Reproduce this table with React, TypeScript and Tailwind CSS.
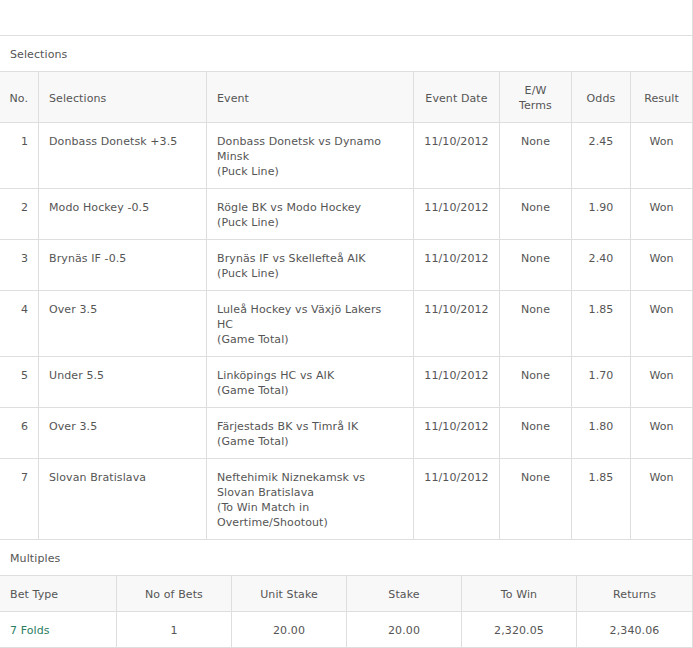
import React from 'react';

type Row = {
    no: number;
    selection: string;
    event: string[];
    odds: string;
};

const rows: Row[] = [
    { no: 1, selection: 'Donbass Donetsk +3.5', event: ['Donbass Donetsk vs Dynamo', 'Minsk', '(Puck Line)'], odds: '2.45' },
    { no: 2, selection: 'Modo Hockey -0.5', event: ['Rögle BK vs Modo Hockey', '(Puck Line)'], odds: '1.90' },
    { no: 3, selection: 'Brynäs IF -0.5', event: ['Brynäs IF vs Skellefteå AIK', '(Puck Line)'], odds: '2.40' },
    { no: 4, selection: 'Over 3.5', event: ['Luleå Hockey vs Växjö Lakers', 'HC', '(Game Total)'], odds: '1.85' },
    { no: 5, selection: 'Under 5.5', event: ['Linköpings HC vs AIK', '(Game Total)'], odds: '1.70' },
    { no: 6, selection: 'Over 3.5', event: ['Färjestads BK vs Timrå IK', '(Game Total)'], odds: '1.80' },
    {
        no: 7,
        selection: 'Slovan Bratislava',
        event: ['Neftehimik Niznekamsk vs', 'Slovan Bratislava', '(To Win Match in', 'Overtime/Shootout)'],
        odds: '1.85',
    },
];

const cell = 'px-[10px] pt-[11px] pb-[9px] border-r border-b border-[#dedede] leading-[15px] whitespace-nowrap';
const head = `${cell} bg-[#f8f8f8]`;

export default function App() {
    return (
        <div
            className="w-[693px] bg-white text-[11px] text-[#555] tracking-[0.1px]"
            style={{ fontFamily: '"DejaVu Sans", Verdana, sans-serif' }}
        >
            {/* empty top row */}
            <div className={`${cell} h-[36px]`} />
            <div className={cell}>Selections</div>

            {/* Selections table */}
            <div className="grid grid-cols-[39px_168px_207px_86px_72px_59px_62px]">
                <div className={`${head} flex items-center justify-end`}>No.</div>
                <div className={`${head} flex items-center`}>Selections</div>
                <div className={`${head} flex items-center`}>Event</div>
                <div className={`${head} flex items-center justify-center`}>Event Date</div>
                <div className={`${head} text-center`}>
                    E/W
                    <br />
                    Terms
                </div>
                <div className={`${head} flex items-center justify-center`}>Odds</div>
                <div className={`${head} flex items-center justify-center`}>Result</div>

                {rows.map((r) => (
                    <React.Fragment key={r.no}>
                        <div className={`${cell} text-right`}>{r.no}</div>
                        <div className={cell}>{r.selection}</div>
                        <div className={cell}>
                            {r.event.map((line, i) => (
                                <div key={i}>{line}</div>
                            ))}
                        </div>
                        <div className={`${cell} text-center`}>11/10/2012</div>
                        <div className={`${cell} text-center`}>None</div>
                        <div className={`${cell} text-center`}>{r.odds}</div>
                        <div className={`${cell} text-center`}>Won</div>
                    </React.Fragment>
                ))}
            </div>

            {/* Multiples */}
            <div className={cell}>Multiples</div>
            <div className="grid grid-cols-[117px_115px_115px_115px_115px_116px]">
                <div className={head}>Bet Type</div>
                <div className={`${head} text-center`}>No of Bets</div>
                <div className={`${head} text-center`}>Unit Stake</div>
                <div className={`${head} text-center`}>Stake</div>
                <div className={`${head} text-center`}>To Win</div>
                <div className={`${head} text-center`}>Returns</div>

                <div className={`${cell} text-[#2b7d60]`}>7 Folds</div>
                <div className={`${cell} text-center`}>1</div>
                <div className={`${cell} text-center`}>20.00</div>
                <div className={`${cell} text-center`}>20.00</div>
                <div className={`${cell} text-center`}>2,320.05</div>
                <div className={`${cell} text-center`}>2,340.06</div>
            </div>
        </div>
    );
}
